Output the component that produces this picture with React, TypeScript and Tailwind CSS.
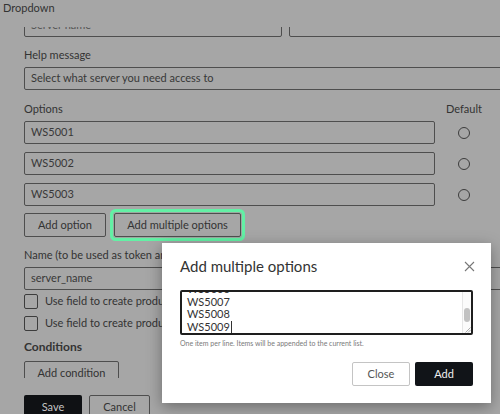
import React from "react";

function Field({ children, className = "" }: { children?: React.ReactNode; className?: string }) {
  return (
    <div
      className={
        "h-[23px] border border-[#4e4e4e] rounded-[2px] px-[6px] flex items-center text-[11px] text-[#383838] whitespace-nowrap overflow-hidden " +
        className
      }
    >
      {children}
    </div>
  );
}

function Radio() {
  return <div className="w-[12px] h-[12px] rounded-full border border-[#3c3c3c]" />;
}

function Checkbox({ label }: { label: string }) {
  return (
    <div className="h-[22px] flex items-center gap-[7px]">
      <div className="w-[14px] h-[15px] border border-[#3c3c3c] rounded-[2px]" />
      <span className="text-[11px] text-[#333]">{label}</span>
    </div>
  );
}

export default function App() {
  return (
    <div className="relative w-[500px] h-[414px] overflow-hidden bg-[#a6a6a6] font-[Lato,sans-serif] text-[#333]">
      {/* header */}
      <div className="h-[27px] pl-[3px] pt-[1px] text-[11px] leading-[14px] text-[#333]">Dropdown</div>

      {/* scroll body */}
      <div className="h-[351px] overflow-hidden">
        <div className="w-[520px] ml-[24px] -mt-[13px] flex flex-col">
          <div className="flex gap-[7px]">
            <Field className="w-[258px]">
              <span className="text-[#555]">Server name</span>
            </Field>
            <Field className="flex-1" />
          </div>

          <div className="mt-[11px] text-[11px] leading-[14px]">Help message</div>
          <Field className="mt-[5px]">Select what server you need access to</Field>

          <div className="mt-[12px] grid grid-cols-[411px_58px] text-[11px] leading-[14px]">
            <span>Options</span>
            <span className="text-center">Default</span>
          </div>

          <div className="mt-[5px] flex flex-col gap-[8px]">
            {["WS5001", "WS5002", "WS5003"].map((v) => (
              <div key={v} className="grid grid-cols-[411px_58px] items-center">
                <Field>{v}</Field>
                <div className="flex justify-center">
                  <Radio />
                </div>
              </div>
            ))}
          </div>

          <div className="mt-[7px] flex gap-[8px]">
            <button className="h-[24px] w-[82px] border border-[#4e4e4e] rounded-[2px] text-[11px] text-[#333]">
              Add option
            </button>
            <button className="h-[24px] w-[127px] border border-[#4e4e4e] rounded-[2px] text-[11px] text-[#333] ring-[3px] ring-[#63f0a5] ring-offset-1 ring-offset-[#9aa89f]">
              Add multiple options
            </button>
          </div>

          <div className="mt-[11px] text-[11px] leading-[14px] whitespace-nowrap">
            Name (to be used as token and for product creation)
          </div>
          <Field className="mt-[5px]">server_name</Field>

          <Checkbox label="Use field to create product name" />
          <Checkbox label="Use field to create product description" />

          <div className="mt-[5px] text-[12px] leading-[16px] font-bold text-[#333]">Conditions</div>
          <button className="mt-[6px] h-[24px] w-[95px] border border-[#4e4e4e] rounded-[2px] text-[11px] text-[#333]">
            Add condition
          </button>
        </div>
      </div>

      {/* footer */}
      <div className="h-[36px] pl-[24px] pt-[17px] flex gap-[7px]">
        <button className="h-[24px] w-[58px] bg-[#0f1114] rounded-[2px] text-[11px] text-[#c4c4c4]">Save</button>
        <button className="h-[24px] w-[61px] border border-[#4e4e4e] rounded-[2px] text-[11px] text-[#333]">
          Cancel
        </button>
      </div>

      {/* modal */}
      <div className="absolute left-[162px] top-[243px] w-[329px] h-[160px] bg-white shadow-[0_4px_14px_rgba(0,0,0,0.35)] px-[18px] pt-[13px] flex flex-col">
        <div className="flex items-center justify-between h-[20px]">
          <span className="text-[15px] leading-[20px] text-[#333]">Add multiple options</span>
          <svg width="11" height="11" viewBox="0 0 11 11" className="mr-[-2px]">
            <path d="M1 1 L10 10 M10 1 L1 10" stroke="#777" strokeWidth="1.1" fill="none" />
          </svg>
        </div>

        <div className="relative mt-[14px] h-[45px] border-2 border-[#1e1e1e] rounded-[2px] overflow-hidden flex">
          <div className="flex-1 pl-[5px] -mt-[9px] text-[11px] leading-[12.5px] text-[#333]">
            <div>WS5006</div>
            <div>WS5007</div>
            <div>WS5008</div>
            <div className="flex items-center">
              WS5009
              <span className="inline-block w-px h-[12px] bg-[#333] ml-px" />
            </div>
          </div>
          <div className="relative w-[9px] border-l border-[#e6e6e6] bg-[#fbfbfb]">
            <div className="absolute top-[16px] left-[1px] w-[6px] h-[14px] rounded-full bg-[#c2c2c2]" />
          </div>
          <svg width="6" height="6" viewBox="0 0 6 6" className="absolute right-0 bottom-0">
            <path d="M5.5 0.5 L0.5 5.5 M5.5 3 L3 5.5" stroke="#999" strokeWidth="0.8" fill="none" />
          </svg>
        </div>

        <div className="mt-[3px] text-[7px] leading-[10px] text-[#7a7a7a] whitespace-nowrap">
          One item per line. Items will be appended to the current list.
        </div>

        <div className="mt-[14px] flex justify-end gap-[5px]">
          <button className="h-[24px] w-[58px] border border-[#c4c4c4] rounded-[2px] bg-white text-[11px] text-[#555]">
            Close
          </button>
          <button className="h-[24px] w-[58px] rounded-[2px] bg-[#111418] text-[11px] text-[#f0f0f0]">Add</button>
        </div>
      </div>
    </div>
  );
}
